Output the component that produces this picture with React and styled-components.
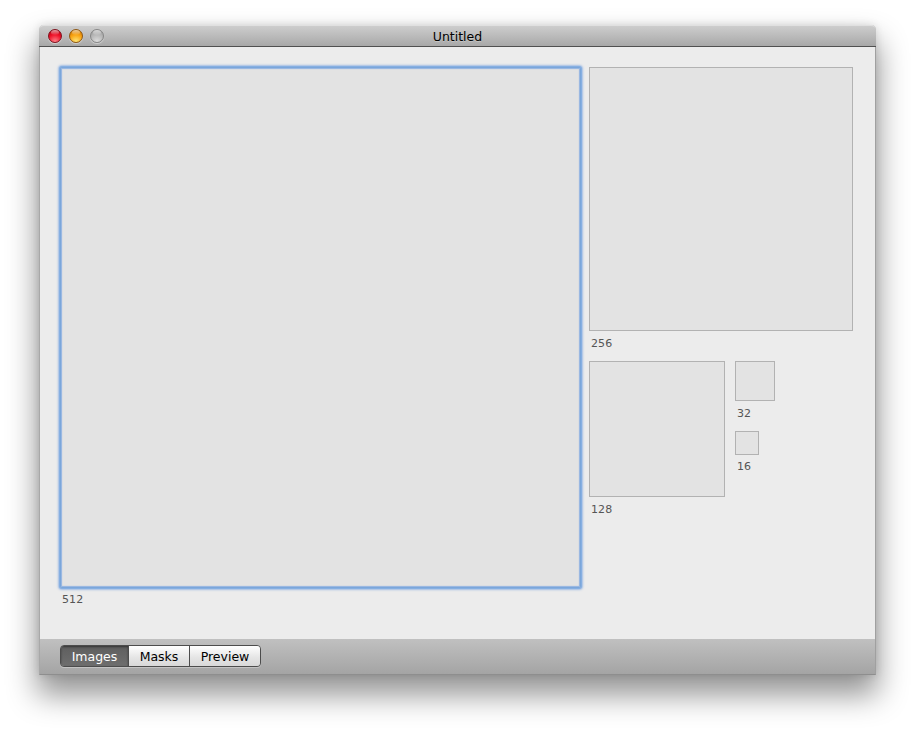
import React from 'react';
import styled, { createGlobalStyle } from 'styled-components';

const Global = createGlobalStyle`
  html, body {
    margin: 0;
    padding: 0;
    background: #fff;
  }
  body {
    width: 915px;
    height: 729px;
    overflow: hidden;
    font-family: "DejaVu Sans", "Liberation Sans", sans-serif;
  }
`;

const Page = styled.div`
  padding: 25px 0 0 39px;
`;

const Window = styled.div`
  width: 837px;
  height: 650px;
  box-sizing: border-box;
  display: flex;
  flex-direction: column;
  border-radius: 5px 5px 0 0;
  border-left: 1px solid #a8a8a8;
  border-right: 1px solid #a0a0a0;
  border-bottom: 1px solid #8e8e8e;
  background: #ececec;
  box-shadow: 0 18px 30px 2px rgba(0, 0, 0, 0.42), 0 0 8px rgba(0, 0, 0, 0.12);
`;

const TitleBar = styled.div`
  position: relative;
  flex: none;
  height: 22px;
  margin: 0 -1px;
  border-radius: 5px 5px 0 0;
  border-top: 1px solid #e0e0e0;
  border-bottom: 1px solid #505050;
  box-sizing: border-box;
  background: linear-gradient(#cdcdcd, #a8a8a8);
  display: flex;
  align-items: center;
  justify-content: center;
`;

const Title = styled.div`
  font-size: 12.5px;
  line-height: 20px;
  padding-top: 1px;
  color: #000;
  text-shadow: 0 1px 0 rgba(255, 255, 255, 0.25);
`;

const Lights = styled.div`
  position: absolute;
  left: 9px;
  top: 3px;
  display: flex;
  gap: 7px;
`;

const Light = styled.div`
  position: relative;
  width: 14px;
  height: 14px;
  border-radius: 50%;
  box-sizing: border-box;
  border: 1px solid ${p => p.$edge};
  background: radial-gradient(circle at 50% 95%, ${p => p.$glow} 0%, ${p => p.$base} 55%, ${p => p.$dark} 100%);
  box-shadow: 0 1px 1px rgba(255, 255, 255, 0.45);
  &::after {
    content: '';
    position: absolute;
    left: 2px;
    right: 2px;
    top: 0;
    height: 5px;
    border-radius: 50%;
    background: linear-gradient(rgba(255, 255, 255, 0.6), rgba(255, 255, 255, 0.05));
  }
`;

const Content = styled.div`
  flex: 1;
  display: flex;
  gap: 8px;
  padding: 20px 0 0 20px;
`;

const Column = styled.div`
  display: flex;
  flex-direction: column;
`;

const Row = styled.div`
  display: flex;
  gap: 10px;
  margin-top: 11px;
`;

const Well = styled.div`
  width: ${p => p.$size + 8}px;
  height: ${p => p.$size + 8}px;
  box-sizing: border-box;
  background: #e3e3e3;
  border: 1px solid #b2b2b2;
  margin-top: ${p => p.$top || 0}px;
`;

const FocusedWell = styled(Well)`
  width: ${p => p.$size + 9}px;
  height: ${p => p.$size + 9}px;
  border: 1px solid #7ba6da;
  border-radius: 2px;
  box-shadow: 0 0 0 1px #86afe2, 0 0 2px 2px rgba(130, 170, 225, 0.7), inset 0 0 1px 1px rgba(130, 170, 225, 0.85);
`;

const Label = styled.div`
  font-size: 11px;
  line-height: 13px;
  letter-spacing: 0.1px;
  color: #555;
  margin: ${p => p.$top}px 0 0 ${p => p.$left}px;
`;

const BottomBar = styled.div`
  flex: none;
  height: 35px;
  box-sizing: border-box;
  padding: 6px 0 0 20px;
  background: linear-gradient(#c0c0c0, #a4a4a4);
`;

const Segments = styled.div`
  display: inline-flex;
  height: 22px;
  box-sizing: border-box;
  border: 1px solid #4c4c4c;
  border-radius: 4px;
  overflow: hidden;
  box-shadow: 0 1px 0 rgba(255, 255, 255, 0.3);
`;

const Segment = styled.div`
  width: ${p => p.$width}px;
  box-sizing: border-box;
  display: flex;
  align-items: center;
  justify-content: center;
  font-size: 12.5px;
  color: ${p => (p.$active ? '#fff' : '#000')};
  background: ${p => (p.$active
    ? 'linear-gradient(#5e5e5e, #6e6e6e)'
    : 'linear-gradient(#ffffff, #e6e6e6 55%, #d8d8d8)')};
  box-shadow: ${p => (p.$active ? 'inset 0 1px 2px rgba(0,0,0,0.45)' : 'none')};
  & + & {
    border-left: 1px solid #4c4c4c;
  }
`;

export default function App() {
  return (
    <Page>
      <Global />
      <Window>
        <TitleBar>
          <Lights>
            <Light $edge="#7e101c" $glow="#ff8088" $base="#ee0f26" $dark="#a00814" />
            <Light $edge="#8e5610" $glow="#ffe878" $base="#f8a00e" $dark="#bc6c06" />
            <Light $edge="#868686" $glow="#dedede" $base="#b6b6b6" $dark="#969696" />
          </Lights>
          <Title>Untitled</Title>
        </TitleBar>
        <Content>
          <Column>
            <FocusedWell $size={512} />
            <Label $top={5} $left={2}>512</Label>
          </Column>
          <Column>
            <Well $size={256} />
            <Label $top={6} $left={2}>256</Label>
            <Row>
              <Column>
                <Well $size={128} />
                <Label $top={6} $left={2}>128</Label>
              </Column>
              <Column>
                <Well $size={32} />
                <Label $top={6} $left={2}>32</Label>
                <Well $size={16} $top={11} />
                <Label $top={5} $left={2}>16</Label>
              </Column>
            </Row>
          </Column>
        </Content>
        <BottomBar>
          <Segments>
            <Segment $active $width={67}>Images</Segment>
            <Segment $width={61}>Masks</Segment>
            <Segment $width={71}>Preview</Segment>
          </Segments>
        </BottomBar>
      </Window>
    </Page>
  );
}
